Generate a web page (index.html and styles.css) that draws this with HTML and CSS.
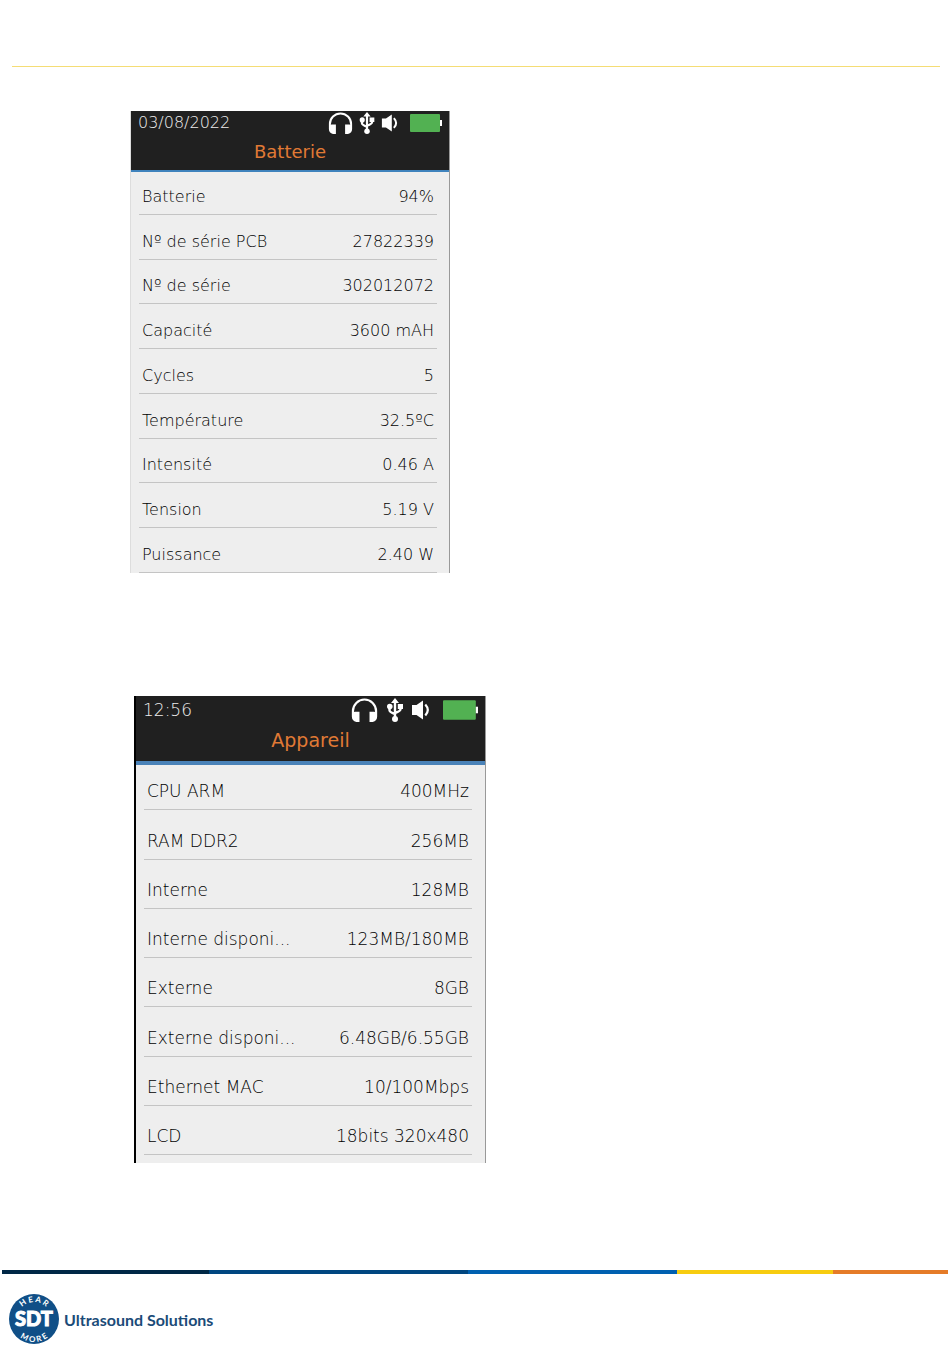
FILE: index.html
```html
<!doctype html>
<html lang="fr">
<head>
	<meta charset="utf-8">
	<title>Batterie - Appareil</title>
	<link rel="stylesheet" href="styles.css">
</head>
<body>
	<svg class="symbols" aria-hidden="true">
		<symbol id="headphones" viewBox="0 0 24 22">
			<path d="M1.400 15V12a10.600 10.600 0 0 1 21.200 0v3" fill="none" stroke="#fff" stroke-width="2"/>
			<path d="M.4 15Q1 12.500 3 12.500h4.400V22H4.500Q.4 21 .4 17zM23.600 15Q23 12.500 21 12.500h-4.400V22h2.900Q23.600 21 23.600 17z" fill="#fff"/>
		</symbol>
		<symbol id="usb" viewBox="0 0 16 24">
			<path d="M8 3v18M2.500 8v4.200Q2.500 14 8 16M13.500 8v3.200Q13.500 13 8 15" fill="none" stroke="#fff" stroke-width="2.400"/>
			<path d="M8 0l4 5H4zM10.800 6h5.200v5h-5.200z" fill="#fff"/>
			<circle cx="2.800" cy="8.600" r="2.800" fill="#fff"/>
			<circle cx="8" cy="21" r="3" fill="#fff"/>
		</symbol>
		<symbol id="speaker" viewBox="0 0 18 20">
			<path d="M0 5h4.500L11 .5v19L4.500 15H0z" fill="#fff"/>
			<path d="M13.300 4.500q5 5.500 0 11" fill="none" stroke="#fff" stroke-width="2.200"/>
		</symbol>
		<symbol id="battery" viewBox="0 0 32 18">
			<rect width="30" height="18" rx="1" fill="#52b152"/>
			<path d="M30 6h2v6h-2z" fill="#fff"/>
		</symbol>
	</svg>

	<main>
		<section class="screen battery-screen">
			<header>
				<div class="status">
					<time>03/08/2022</time>
					<div class="icons">
						<svg class="headphones"><use href="#headphones"/></svg>
						<svg class="usb"><use href="#usb"/></svg>
						<svg class="speaker"><use href="#speaker"/></svg>
						<svg class="battery"><use href="#battery"/></svg>
					</div>
				</div>
				<h2>Batterie</h2>
			</header>
			<table>
				<tr><th scope="row">Batterie</th><td>94%</td></tr>
				<tr><th scope="row">Nº de série PCB</th><td>27822339</td></tr>
				<tr><th scope="row">Nº de série</th><td>302012072</td></tr>
				<tr><th scope="row">Capacité</th><td>3600 mAH</td></tr>
				<tr><th scope="row">Cycles</th><td>5</td></tr>
				<tr><th scope="row">Température</th><td>32.5ºC</td></tr>
				<tr><th scope="row">Intensité</th><td>0.46 A</td></tr>
				<tr><th scope="row">Tension</th><td>5.19 V</td></tr>
				<tr><th scope="row">Puissance</th><td>2.40 W</td></tr>
			</table>
		</section>

		<section class="screen device-screen">
			<header>
				<div class="status">
					<time>12:56</time>
					<div class="icons">
						<svg class="headphones"><use href="#headphones"/></svg>
						<svg class="usb"><use href="#usb"/></svg>
						<svg class="speaker"><use href="#speaker"/></svg>
						<svg class="battery"><use href="#battery"/></svg>
					</div>
				</div>
				<h2>Appareil</h2>
			</header>
			<table>
				<tr><th scope="row">CPU ARM</th><td>400MHz</td></tr>
				<tr><th scope="row">RAM DDR2</th><td>256MB</td></tr>
				<tr><th scope="row">Interne</th><td>128MB</td></tr>
				<tr><th scope="row">Interne disponi...</th><td>123MB/180MB</td></tr>
				<tr><th scope="row">Externe</th><td>8GB</td></tr>
				<tr><th scope="row">Externe disponi...</th><td>6.48GB/6.55GB</td></tr>
				<tr><th scope="row">Ethernet MAC</th><td>10/100Mbps</td></tr>
				<tr><th scope="row">LCD</th><td>18bits 320x480</td></tr>
			</table>
		</section>
	</main>

	<footer>
		<div class="stripes">
			<span class="navy"></span>
			<span class="dark-blue"></span>
			<span class="blue"></span>
			<span class="yellow"></span>
			<span class="orange"></span>
		</div>
		<div class="brand">
			<svg class="logo" viewBox="0 0 50 50">
				<defs>
					<path id="arc-top" d="M8 25a17 17 0 0 1 34 0"/>
					<path id="arc-bottom" d="M2 25a23 23 0 0 0 46 0"/>
				</defs>
				<circle cx="25" cy="25" r="25" fill="#104f87"/>
				<text class="logo-ring"><textPath href="#arc-top" startOffset="50%">H E A R</textPath></text>
				<text class="logo-ring"><textPath href="#arc-bottom" startOffset="50%">M O R E</textPath></text>
				<text class="logo-name" x="25" y="32">SDT</text>
			</svg>
			<span>Ultrasound Solutions</span>
		</div>
	</footer>
</body>
</html>
```

FILE: styles.css
```css
* {
	box-sizing: border-box;
}

body {
	margin: 0;
	min-height: 100vh;
	display: flex;
	flex-direction: column;
	background: white;
	font-family: "DejaVu Sans Light", "DejaVu Sans", sans-serif;
	font-weight: 200;
}

.symbols {
	display: none;
}

main {
	margin: 66px 10px 0 12px;
	padding: 44px 0 0 118px;
	border-top: 1px solid #f5dd75;
}

.screen {
	background: #eee;
	border-right: 1px solid #999;
}

.battery-screen {
	width: 320px;
	font-size: 16px;
	border-left: 1px solid #ddd;
}

.device-screen {
	width: 352px;
	margin: 123px 0 0 4px;
	padding-bottom: 8px;
	font-size: 17px;
	border-left: 2px solid black;
}

.screen header {
	background: #202020;
	border-bottom: 2px solid #3f83bd;
	height: 61px;
}

.device-screen header {
	border-bottom: 4px solid #4a82b8;
	height: 69px;
}

.status {
	display: flex;
	justify-content: space-between;
	padding: 1px 7px 0;
	color: #eee;
	line-height: 22px;
}

.device-screen .status {
	padding-top: 2px;
	line-height: 24px;
}

.icons {
	display: flex;
	align-items: center;
	gap: 6px;
	height: 22px;
}

.headphones {
	width: 25px;
	height: 22px;
}

.usb {
	width: 16px;
	height: 22px;
}

.speaker {
	width: 18px;
	height: 18px;
}

.battery {
	width: 32px;
	height: 18px;
	margin-left: 5px;
}

.device-screen .icons {
	gap: 8px;
	height: 24px;
}

.device-screen .headphones {
	width: 27px;
	height: 24px;
}

.device-screen .usb {
	width: 18px;
	height: 24px;
}

.device-screen .speaker {
	height: 20px;
}

.device-screen .battery {
	width: 35px;
	height: 20px;
}

h2 {
	margin: 8px 0 0;
	font-family: "DejaVu Sans", sans-serif;
	font-size: 18px;
	font-weight: normal;
	line-height: 20px;
	text-align: center;
	color: #e07a35;
}

.device-screen h2 {
	font-size: 19px;
}

/* the first row starts behind the header line */
table {
	width: calc(100% - 20px);
	height: 403px;
	margin: -2px auto 0 8px;
	border-spacing: 0;
	color: black;
}

.device-screen table {
	width: calc(100% - 21px);
	height: 394px;
	margin-top: -4px;
}

th, td {
	padding: 0 3px 7px;
	border-bottom: 1px solid #c4c4c4;
	font-weight: inherit;
	line-height: 20px;
	vertical-align: bottom;
	text-align: left;
	white-space: nowrap;
}

.device-screen th, .device-screen td {
	padding-bottom: 8px;
}

td {
	text-align: right;
}

footer {
	margin-top: auto;
	padding: 0 2px 9px;
}

.stripes {
	display: flex;
	height: 4px;
}

.navy {
	flex: 207;
	background: #002846;
}

.dark-blue {
	flex: 259;
	background: #004680;
}

.blue {
	flex: 209;
	background: #0060b0;
}

.yellow {
	flex: 156;
	background: #f7cc10;
}

.orange {
	flex: 115;
	background: #e57b28;
}

.brand {
	display: flex;
	align-items: center;
	gap: 5px;
	padding: 20px 0 0 7px;
	font-family: Lato, sans-serif;
	font-size: 16px;
	font-weight: bold;
	color: #1b4b78;
}

.logo {
	width: 50px;
	height: 50px;
}

.logo text {
	fill: white;
	text-anchor: middle;
	font-family: Lato, sans-serif;
	font-weight: bold;
}

.logo .logo-ring {
	font-size: 8px;
}

.logo .logo-name {
	font-size: 20px;
	font-weight: 900;
	stroke: white;
	stroke-width: 1px;
}
```
